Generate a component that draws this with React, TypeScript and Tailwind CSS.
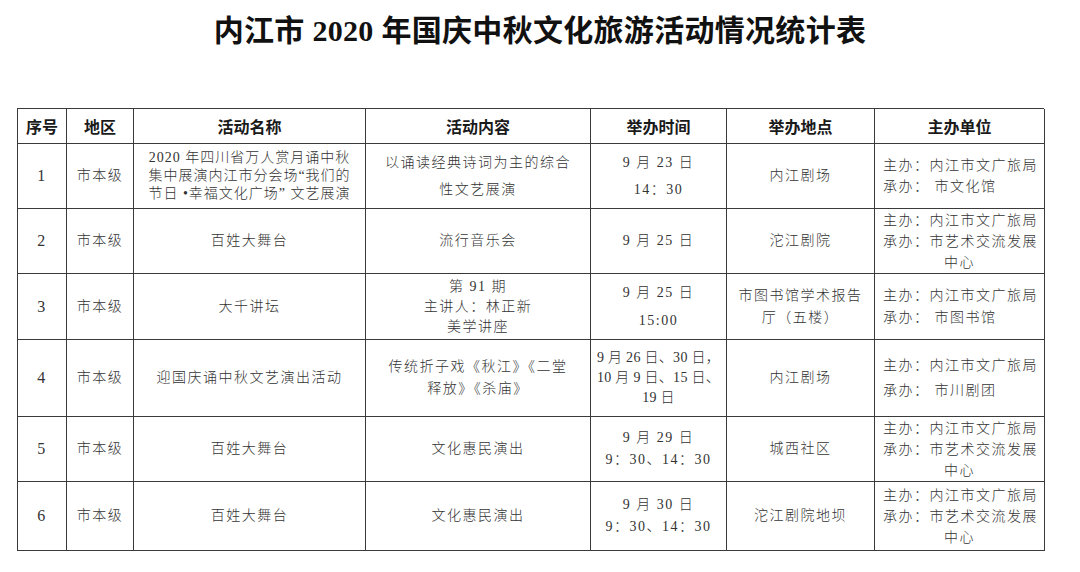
import React from "react";

type Line = { t: string; a?: "left" | "center" };
type Cell = { lines: (string | Line)[]; cls?: string; left?: boolean };

const rows: { h: string; cells: Cell[] }[] = [
  {
    h: "h-[65px]",
    cells: [
      { lines: ["1"] },
      { lines: ["市本级"] },
      {
        lines: ["2020 年四川省万人赏月诵中秋", "集中展演内江市分会场“我们的", "节日 •幸福文化广场” 文艺展演"],
        cls: "leading-[18px] tracking-[1px]",
      },
      { lines: ["以诵读经典诗词为主的综合", "性文艺展演"], cls: "leading-[27px]" },
      { lines: ["9 月 23 日", "14：30"], cls: "leading-[27px]" },
      { lines: ["内江剧场"] },
      { lines: ["主办：内江市文广旅局", "承办： 市文化馆"], left: true, cls: "leading-[21px]" },
    ],
  },
  {
    h: "h-[65px]",
    cells: [
      { lines: ["2"] },
      { lines: ["市本级"] },
      { lines: ["百姓大舞台"] },
      { lines: ["流行音乐会"] },
      { lines: ["9 月 25 日"] },
      { lines: ["沱江剧院"] },
      { lines: ["主办：内江市文广旅局", "承办：市艺术交流发展", { t: "中心", a: "center" }], left: true, cls: "leading-[21px]" },
    ],
  },
  {
    h: "h-[66px]",
    cells: [
      { lines: ["3"] },
      { lines: ["市本级"] },
      { lines: ["大千讲坛"] },
      { lines: ["第 91 期", "主讲人：林正新", "美学讲座"] },
      { lines: ["9 月 25 日", "15:00"], cls: "leading-[28px]" },
      { lines: ["市图书馆学术报告", "厅（五楼）"], cls: "leading-[22px]" },
      { lines: ["主办：内江市文广旅局", "承办： 市图书馆"], left: true, cls: "leading-[22px]" },
    ],
  },
  {
    h: "h-[77px]",
    cells: [
      { lines: ["4"] },
      { lines: ["市本级"] },
      { lines: ["迎国庆诵中秋文艺演出活动"] },
      { lines: ["传统折子戏《秋江》《二堂", "释放》《杀庙》"], cls: "leading-[22px]" },
      { lines: ["9 月 26 日、30 日，", "10 月 9 日、15 日、", "19 日"], cls: "leading-[20px] tracking-[0.3px]" },
      { lines: ["内江剧场"] },
      { lines: ["主办：内江市文广旅局", "承办： 市川剧团"], left: true, cls: "leading-[25px]" },
    ],
  },
  {
    h: "h-[65px]",
    cells: [
      { lines: ["5"] },
      { lines: ["市本级"] },
      { lines: ["百姓大舞台"] },
      { lines: ["文化惠民演出"] },
      { lines: ["9 月 29 日", "9：30、14：30"], cls: "leading-[22px]" },
      { lines: ["城西社区"] },
      { lines: ["主办：内江市文广旅局", "承办：市艺术交流发展", { t: "中心", a: "center" }], left: true, cls: "leading-[21px]" },
    ],
  },
  {
    h: "h-[69px]",
    cells: [
      { lines: ["6"] },
      { lines: ["市本级"] },
      { lines: ["百姓大舞台"] },
      { lines: ["文化惠民演出"] },
      { lines: ["9 月 30 日", "9：30、14：30"], cls: "leading-[22px]" },
      { lines: ["沱江剧院地坝"] },
      { lines: ["主办：内江市文广旅局", "承办：市艺术交流发展", { t: "中心", a: "center" }], left: true, cls: "leading-[21px]" },
    ],
  },
];

const headers = ["序号", "地区", "活动名称", "活动内容", "举办时间", "举办地点", "主办单位"];

export default function App() {
  return (
    <div className="w-[1080px] h-[572px] bg-white overflow-hidden font-['Liberation_Serif','Noto_Sans_CJK_SC',serif]">
      <div className="h-[108px] pt-[13px] flex justify-center">
        <h1 className="text-[30px] leading-[36px] font-bold text-[#111] tracking-[0.3px]">
          内江市 2020 年国庆中秋文化旅游活动情况统计表
        </h1>
      </div>
      <div className="ml-[17px] w-[1027px] border-l border-t border-[#3a3a3a]">
        <div className="grid grid-cols-[49px_67px_232px_225px_136px_148px_170px] h-[35px]">
          {headers.map((h) => (
            <div
              key={h}
              className="border-r border-b border-[#3a3a3a] flex items-center justify-center text-[16px] font-bold text-[#1a1a1a] font-['Noto_Sans_CJK_SC',sans-serif]"
            >
              {h}
            </div>
          ))}
        </div>
        {rows.map((r, i) => (
          <div key={i} className={"grid grid-cols-[49px_67px_232px_225px_136px_148px_170px] " + r.h}>
            {r.cells.map((c, j) => (
              <div
                key={j}
                className={
                  "border-r border-b border-[#3a3a3a] flex flex-col justify-center font-light text-[#333] " +
                  (j === 0 ? "text-[16px] " : "text-[14px] ") +
                  (c.cls ?? "leading-[20px]") +
                  (c.cls && c.cls.includes("tracking") ? " " : " tracking-[1.5px] ") +
                  (c.left ? "items-stretch pl-[8px] text-left" : "items-center text-center")
                }
              >
                {c.lines.map((l, k) => {
                  const line = typeof l === "string" ? { t: l } : l;
                  return (
                    <div key={k} className={"whitespace-nowrap " + (line.a === "center" ? "text-center pr-[8px]" : "")}>
                      {line.t}
                    </div>
                  );
                })}
              </div>
            ))}
          </div>
        ))}
      </div>
    </div>
  );
}
